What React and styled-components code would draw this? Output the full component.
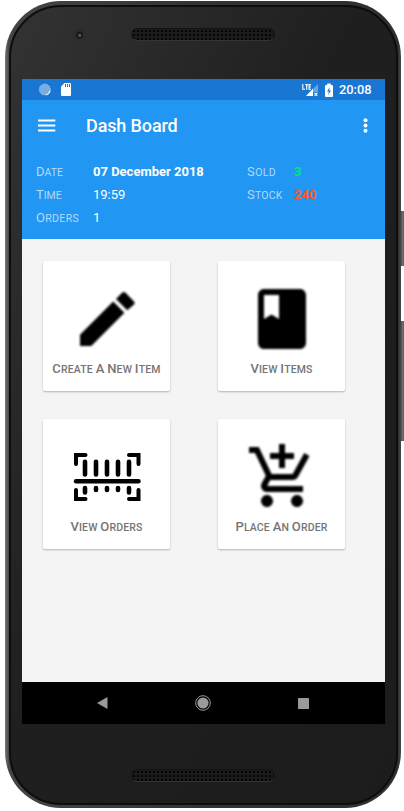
import React from 'react';
import styled, { createGlobalStyle } from 'styled-components';

const GlobalStyle = createGlobalStyle`
  * { box-sizing: border-box; }
  body { margin: 0; background: #fff; font-family: Roboto, sans-serif; overflow: hidden; }
  svg { display: block; flex: none; }
`;

const Stage = styled.div`
  position: relative;
  width: 404px;
  height: 811px;
  padding: 1px 0 0 5px;
`;

const Phone = styled.div`
  position: relative;
  width: 396px;
  height: 807px;
  border-radius: 56px;
  padding: 4px 3px 3px 4px;
  background: linear-gradient(90deg, #777 0, #454545 4px, #333 50%, #302e2f 393px, #494748 396px);
`;

const Face = styled.div`
  height: 100%;
  border-radius: 52px;
  border: 2px solid #0d0d0d;
  background: linear-gradient(115deg, #333 0%, #2b2b2b 18%, #1f1f1f 45%, #1c1c1d 100%);
  display: flex;
  flex-direction: column;
  padding-left: 11px;
`;

const SideButton = styled.div`
  position: absolute;
  left: 401px;
  top: ${(p) => p.$top}px;
  width: 3px;
  height: ${(p) => p.$height}px;
  background: linear-gradient(90deg, #444, #777 60%, #555);
`;

const Bezel = styled.div`
  height: ${(p) => p.$height}px;
  flex: none;
  display: grid;
  grid-template-columns: 109px 144px;
  padding-top: ${(p) => p.$inset}px;
  align-items: start;
`;

const Camera = styled.div`
  width: 14px;
  height: 14px;
  margin-left: 50px;
  border-radius: 50%;
  border: 3px solid #2d2d2d;
  background: radial-gradient(circle at 60% 55%, #66515c 0 1px, #1b181d 2px 3px, #302c33 5px);
`;

const Speaker = styled.div`
  grid-column: 2;
  height: 13px;
  border-radius: 7px;
  border: 1px solid #141414;
  border-bottom-color: #343434;
  background: radial-gradient(circle, #050505 0.8px, #1b1b1b 1.5px) 0 0 / 4px 4px;
`;

const Screen = styled.div`
  width: 363px;
  height: 645px;
  flex: none;
  display: flex;
  flex-direction: column;
  background: #f4f4f4;
`;

const StatusBar = styled.div`
  height: 21px;
  flex: none;
  background: #1976d2;
  color: #fff;
  display: flex;
  align-items: center;
  padding: 0 15px 0 16px;
`;

const Clock = styled.span`
  font-size: 12.8px;
  font-weight: 500;
  line-height: 21px;
  margin-left: 6px;
  width: 31px;
  white-space: nowrap;
`;

const Spacer = styled.div`
  flex: 1;
`;

const Header = styled.div`
  height: 139px;
  flex: none;
  background: #2196f3;
  color: #fff;
`;

const AppBar = styled.div`
  height: 51px;
  display: flex;
  align-items: center;
  padding: 0 16px;
`;

const Title = styled.h1`
  margin: 0 auto 0 30px;
  font-size: 18px;
  font-weight: 500;
  line-height: 24px;
  letter-spacing: -0.12px;
  white-space: nowrap;
`;

const Info = styled.div`
  display: grid;
  grid-template-columns: 57px 154px 47px 1fr;
  grid-auto-rows: 23px;
  align-items: center;
  padding: 9px 0 0 14px;
`;

const Value = styled.span`
  font-size: 13px;
  line-height: 23px;
  font-weight: ${(p) => (p.$bold ? 700 : 400)};
  color: ${(p) => p.$color || '#fff'};
  white-space: nowrap;
`;

const Caps = styled.span`
  white-space: nowrap;
  font-size: ${(p) => p.$size}px;
  line-height: 23px;
  font-weight: ${(p) => p.$weight};
  letter-spacing: ${(p) => p.$spacing}px;
  color: ${(p) => p.$color};
`;

const Word = styled.span`
  display: inline-block;
  text-transform: uppercase;
  &::first-letter { font-size: 13px; }
`;

const Grid = styled.div`
  flex: 1;
  display: grid;
  grid-template-columns: 127px 127px;
  grid-auto-rows: 130px;
  column-gap: 48px;
  row-gap: 28px;
  padding: 22px 0 0 21px;
`;

const Card = styled.div`
  border-radius: 2px;
  background: #fff;
  box-shadow: 0 1px 2px rgba(0, 0, 0, 0.27);
  display: flex;
  flex-direction: column;
  align-items: center;
  padding-top: 21px;
`;

const IconSlot = styled.div`
  height: 75px;
  padding-top: ${(p) => (p.$soft ? 1 : 0)}px;
  filter: blur(${(p) => (p.$soft ? 0.8 : 0.3)}px);
`;

const NavBar = styled.div`
  height: 42px;
  flex: none;
  background: #000;
  display: flex;
  align-items: center;
  justify-content: space-between;
  padding: 0 76px 0 75px;
`;

const SmallCaps = ({ text, ...rest }) => (
  <Caps {...rest}>
    {text.split(' ').map((w, i) => (
      <React.Fragment key={w}>
        {i > 0 && ' '}
        <Word>{w}</Word>
      </React.Fragment>
    ))}
  </Caps>
);

const Label = ({ text, spacing = 0.4 }) => (
  <SmallCaps text={text} $size={10.5} $weight={400} $spacing={spacing} $color="#b3dafa" />
);

const Glyph = ({ d }) => (
  <svg width="72" height="72" viewBox="0 0 24 24"><path d={d} /></svg>
);

const PENCIL = 'M3 17.25V21h3.75L17.81 9.94l-3.75-3.75L3 17.25zM21 7.2q.4-.5 0-1L18.1 3.2q-.5-.4-1 0L15 5.3l3.75 3.75z';
const BOOK = 'M18 2H6c-1.1 0-2 .9-2 2v16c0 1.1.9 2 2 2h12c1.1 0 2-.9 2-2V4c0-1.1-.9-2-2-2zM6 4h5v8l-2.5-1.5L6 12V4z';
const CART = 'M11 9h2V6h3V4h-3V1h-2v3H8v2h3v3zm-4 9c-1.1 0-1.99.9-1.99 2S5.9 22 7 22s2-.9 2-2-.9-2-2-2zm10 0c-1.1 0-1.99.9-1.99 2s.89 2 1.99 2 2-.9 2-2-.9-2-2-2zm-9.83-3.25l.03-.12.9-1.63h7.45c.75 0 1.41-.41 1.75-1.03l3.86-7.01L19.42 4h-.01l-1.1 2-2.76 5H8.53l-.13-.27L6.16 6l-.95-2-.94-2H1v2h2l3.6 7.59-1.35 2.45c-.16.28-.25.61-.25.96 0 1.1.9 2 2 2h12v-2H7.42c-.13 0-.25-.11-.25-.25z';

const Barcode = () => (
  <svg width="72" height="72" viewBox="0 0 72 72" fill="none" stroke="#000" strokeWidth="4" strokeLinecap="round">
    <path d="M5 24V15H14.5M58 15H67.5V24M5 50V59H14.5M58 59H67.5V50" />
    <path d="M5 41.3H67.5" strokeWidth="4.4" />
    <path d="M14 21.7V34.5M25 21.7V34.5M36 21.7V34.5M47 21.7V34.5M58 21.7V34.5" strokeWidth="4.6" />
    <path d="M14 48V52.5M25 48V50M36 48V50M47 48V50M58 48V52.5" strokeWidth="4.6" />
  </svg>
);

const CARDS = [
  { label: 'Create A New Item', icon: <Glyph d={PENCIL} />, soft: true },
  { label: 'View Items', icon: <Glyph d={BOOK} />, soft: true },
  { label: 'View Orders', icon: <Barcode />, soft: false },
  { label: 'Place An Order', icon: <Glyph d={CART} />, soft: true },
];

export default function App() {
  return (
    <Stage>
      <GlobalStyle />
      <Phone>
        <Face>
          <Bezel $height={72} $inset={21}>
            <Camera />
            <Speaker />
          </Bezel>
          <Screen>
            <StatusBar>
              <svg width="13" height="13" viewBox="0 0 13 13">
                <circle cx="6.8" cy="6.5" r="5.5" fill="#75ade4" stroke="#a5c9ee" strokeDasharray="1 1" />
                <path d="M12.1 7.5A5.5 5.5 0 0 1 7.8 11.8" fill="none" stroke="#fff" strokeWidth="1.1" />
              </svg>
              <svg width="20" height="13" viewBox="0 0 20 13">
                <path d="M13.5 0H19q1 0 1 1V12q0 1-1 1H11q-1 0-1-1V3.5z" fill="#fff" />
                <path d="M14.5 1V4M16.5 1V4M18.5 1V4" stroke="#1976d2" />
              </svg>
              <Spacer />
              <svg width="17" height="14" viewBox="0 0 17 14">
                <path d="M16 1V9H11V6z" fill="#69a5e1" />
                <path d="M11 5.5V13H4z" fill="#fff" />
                <path d="M.8 1V6.2H3M3.3 1.6H6M4.7 1.6V6.8M9 1.6H7V6.2H9M7 3.9H8.8" fill="none" stroke="#fff" strokeWidth="1.1" />
                <path d="M12.5 9.8L15.3 12.8M15.3 9.8L12.5 12.8" stroke="#fff" strokeWidth="1.1" />
              </svg>
              <svg width="14" height="14" viewBox="1 0 14 14">
                <path d="M9.2.5H12.8V2H14q1 0 1 1V13q0 1-1 1H8q-1 0-1-1V3q0-1 1-1H9.2z" fill="#fff" />
                <path d="M11.8 4L9 8.6H10.8L10.2 12L13 7.4H11.2z" fill="#1976d2" />
              </svg>
              <Clock>20:08</Clock>
            </StatusBar>
            <Header>
              <AppBar>
                <svg width="18" height="13" viewBox="0 0 18 13" stroke="#fff" strokeWidth="1.9">
                  <path d="M0 1.5H17.3M0 6.5H17.3M0 11.5H17.3" />
                </svg>
                <Title>Dash Board</Title>
                <svg width="7" height="15" viewBox="0 0 7 15" fill="#fff">
                  <circle cx="3.5" cy="2.2" r="2" />
                  <circle cx="3.5" cy="7.5" r="2" />
                  <circle cx="3.5" cy="12.8" r="2" />
                </svg>
              </AppBar>
              <Info>
                <Label text="Date" spacing={0} />
                <Value $bold>07 December 2018</Value>
                <Label text="Sold" />
                <Value $bold $color="#00e676">3</Value>
                <Label text="Time" spacing={0} />
                <Value>19:59</Value>
                <Label text="Stock" spacing={0.2} />
                <Value $bold $color="#ff5722">240</Value>
                <Label text="Orders" spacing={0.35} />
                <Value>1</Value>
              </Info>
            </Header>
            <Grid>
              {CARDS.map((c) => (
                <Card key={c.label}>
                  <IconSlot $soft={c.soft}>{c.icon}</IconSlot>
                  <SmallCaps text={c.label} $size={10.5} $weight={500} $spacing={0.15} $color="#757575" />
                </Card>
              ))}
            </Grid>
            <NavBar>
              <svg width="11" height="12" viewBox="0 0 11 12"><path d="M0 6L10.5 0V12z" fill="#9a9a9a" /></svg>
              <svg width="16" height="16" viewBox="0 0 16 16">
                <circle cx="8" cy="8" r="7.3" fill="none" stroke="#9a9a9a" />
                <circle cx="8" cy="8" r="5.6" fill="#9a9a9a" />
              </svg>
              <svg width="11" height="11" viewBox="0 0 11 11"><rect width="11" height="11" rx="0.5" fill="#9a9a9a" /></svg>
            </NavBar>
          </Screen>
          <Bezel $height={78} $inset={45}>
            <Speaker />
          </Bezel>
        </Face>
      </Phone>
      <SideButton $top={211} $height={55} />
      <SideButton $top={321} $height={120} />
    </Stage>
  );
}
